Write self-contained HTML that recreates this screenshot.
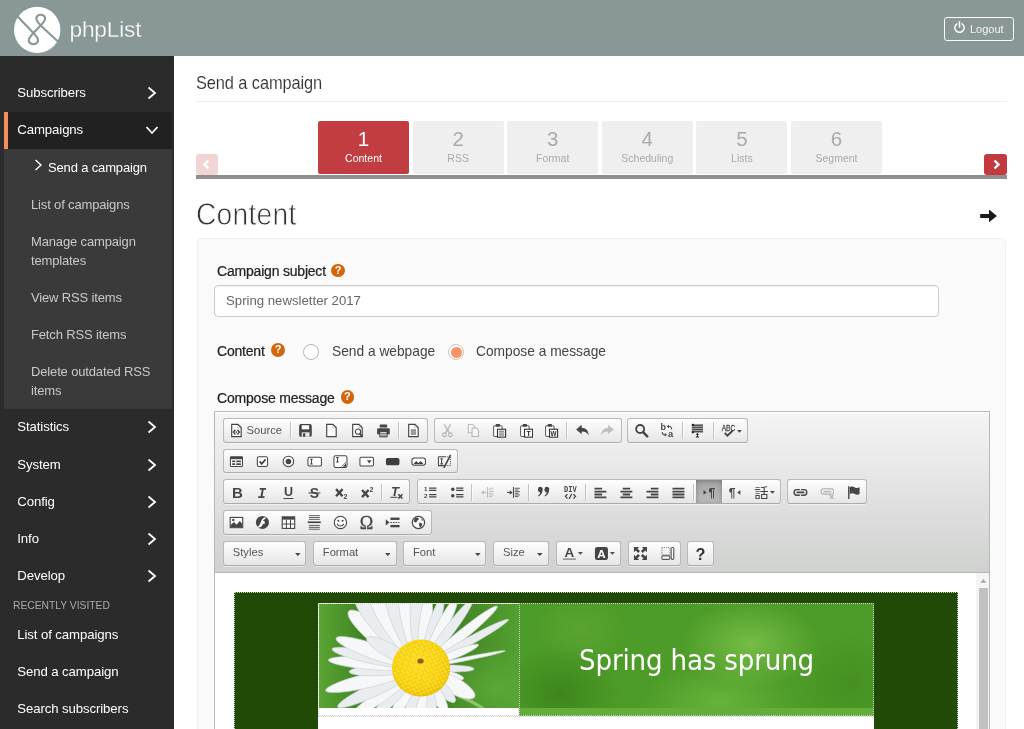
<!DOCTYPE html>
<html lang="en">
<head>
<meta charset="utf-8">
<title>phpList - Send a campaign</title>
<style>
*{box-sizing:border-box;margin:0;padding:0}
html,body{width:1024px;height:729px;overflow:hidden;background:#fff}
body{font-family:"Liberation Sans",sans-serif;color:#333;position:relative;font-size:14px}
.abs{position:absolute}
#header{position:absolute;left:0;top:0;width:1024px;height:56px;background:#899796}
#brand{position:absolute;left:69.5px;top:13px;font-size:22.7px;line-height:32px;color:#fff;font-weight:400;letter-spacing:-.2px;-webkit-text-stroke:.3px #899796}
#logout{position:absolute;left:944px;top:17px;width:70px;height:24px;border:1px solid #fff;border-radius:3px;color:rgba(255,255,255,.9);font-size:11px;line-height:22px;padding-left:25px}
#sidebar{position:absolute;left:0;top:56px;width:174px;height:673px;background:#2b2b2b}
.mi{position:absolute;left:17.3px;color:#fff;font-size:13.2px;letter-spacing:-.1px;line-height:18px;white-space:nowrap}
.sub{position:absolute;left:31px;color:#c9c9c9;font-size:13px;letter-spacing:-.15px;line-height:19px;white-space:nowrap}
.chev{position:absolute;left:146px;width:12px;height:14px}
#main{position:absolute;left:174px;top:56px;width:850px;height:673px;background:#fff}

#ptitle{position:absolute;left:196px;top:72px;transform:scaleY(1.1);transform-origin:0 80%;font-size:16.4px;line-height:22px;color:#333;letter-spacing:-.1px;-webkit-text-stroke:.1px #fff}
#hr1{position:absolute;left:196px;top:101px;width:811px;height:1px;background:#eee}
.tab{position:absolute;top:121px;width:91px;height:53.4px;background:#efefef;border-radius:2px;text-align:center;color:#aaa}
.tab b{display:block;font-weight:400;font-size:20.5px;line-height:22px;margin-top:7px}
.tab span{display:block;font-size:10.5px;line-height:14px;margin-top:1px}
.tab.on{background:#c13d42;color:#fff}
#tline{position:absolute;left:196px;top:175px;width:811px;height:4px;background:#8e8e8e}
#prev{position:absolute;left:196px;top:154px;width:22px;height:21px;background:#f1d4d4;border-radius:3px}
#next{position:absolute;left:984px;top:154px;width:23px;height:21px;background:#c23a40;border-radius:3px}
#h2{position:absolute;left:196px;top:196.5px;transform:scaleY(1.13);transform-origin:0 78%;font-size:28.2px;line-height:36px;color:#333;letter-spacing:.25px;-webkit-text-stroke:.7px #fff}
#panel{position:absolute;left:197px;top:238px;width:809px;height:500px;background:#fafafa;border:1px solid #f0f0f0;border-radius:4px}
.lbl{position:absolute;font-size:14px;line-height:18px;color:#222;font-weight:400;white-space:nowrap;letter-spacing:-.2px;-webkit-text-stroke:.22px #222}
.help{position:absolute;width:13.6px;height:13.6px;border-radius:7px;background:#d5650b;color:#fff;font-size:11px;line-height:13.6px;font-weight:700;text-align:center}
#subj{position:absolute;left:214px;top:285px;width:725px;height:32px;border:1px solid #ccc;border-radius:4px;background:#fff;font-size:13.2px;line-height:30px;padding-left:11px;color:#666;box-shadow:inset 0 1px 1px rgba(0,0,0,.06)}
.rad{position:absolute;width:16px;height:16px;border-radius:8px;border:1px solid #b5b5b5;background:#fff}
.rtx{position:absolute;font-size:13.75px;line-height:18px;color:#444;white-space:nowrap}

#cke{position:absolute;left:214px;top:411px;width:776px;height:330px;border:1px solid #b8b8b8;background:#fff}
#cketop{position:absolute;left:215px;top:412px;width:774px;height:161px;background:linear-gradient(#f4f4f4,#cfd1cf);border-bottom:1px solid #b6b6b6;box-shadow:inset 0 1px 0 #fff}
.ckg{position:absolute;border:1px solid #b9b9b9;border-bottom-color:#ababab;border-radius:3px;background:linear-gradient(#fefefe,#e6e6e6);box-shadow:0 1px 0 rgba(255,255,255,.5)}
.cks{position:absolute;width:1px;height:17px;background:#c2c2c2;box-shadow:1px 0 0 rgba(255,255,255,.6)}
.ckt{position:absolute;font-size:11.2px;line-height:14px;color:#555;white-space:nowrap}
.ckon{position:absolute;background:linear-gradient(#a4a4a4,#bcbcbc);box-shadow:inset 0 1px 5px rgba(0,0,0,.28)}

#banner{position:absolute;left:519px;top:603px;width:355px;height:113px;border:1px dotted #d3d3d3;overflow:hidden;
background:radial-gradient(ellipse 70px 45px at 230px 40px,rgba(130,200,80,.75),rgba(130,200,80,0)),radial-gradient(ellipse 80px 40px at 200px 98px,rgba(120,195,70,.6),rgba(120,195,70,0)),radial-gradient(ellipse 60px 50px at 40px 90px,rgba(50,120,20,.6),rgba(50,120,20,0)),radial-gradient(ellipse 50px 40px at 60px 25px,rgba(110,180,60,.4),rgba(110,180,60,0)),radial-gradient(ellipse 50px 50px at 330px 80px,rgba(60,130,25,.45),rgba(60,130,25,0)),#4d9b28}
#bstripe{position:absolute;left:0;top:104px;width:353px;height:7px;background:#62ae38}
#btext{position:absolute;left:0;top:31.5px;width:353px;text-align:center;font-family:"DejaVu Sans Condensed","DejaVu Sans",sans-serif;font-size:29px;line-height:48px;letter-spacing:-.15px;color:#fff;white-space:nowrap}
#wrap{position:absolute;left:0;top:0;width:1024px;height:729px;overflow:hidden;will-change:transform}
</style>
</head>
<body>
<div id="wrap">
<div id="header">
  <svg class="abs" style="left:0;top:0" width="70" height="56" viewBox="0 0 70 56">
    <circle cx="37.2" cy="29.9" r="23.2" fill="#fff"/>
    <path d="M17.6 16.6 L33.4 33 C37.2 36.9 38.7 39.2 37.9 41.4 C36.5 45.1 30.3 45.1 28.9 41.4 C28.1 39.2 29.6 36.9 33.4 33 L40.7 25.4 C44.5 21.5 45.7 19.4 44.9 17.3 C43.5 13.8 37.9 13.8 36.5 17.3 C35.7 19.4 36.9 21.5 40.7 25.4 L57.6 41.2" fill="none" stroke="#899796" stroke-width="2.1"/>
  </svg>
  <div id="brand">phpList</div>
  <div id="logout">Logout
    <svg class="abs" style="left:8px;top:3px" width="13" height="13" viewBox="0 0 12 12"><path d="M3.6 2.6 A4.3 4.3 0 1 0 8.4 2.6" fill="none" stroke="#fff" stroke-width="1.4" stroke-linecap="round"/><path d="M6 0.8 V5.6" stroke="#fff" stroke-width="1.4" stroke-linecap="round"/></svg>
  </div>
</div>
<div id="sidebar">
<div class="abs" style="left:4px;top:56px;width:168px;height:37px;background:#212121;border-left:4px solid #f58d5d"></div>
<div class="abs" style="left:4px;top:93px;width:168px;height:260px;background:#3a3a3a"></div>
<div class="mi" style="top:28px">Subscribers</div>
<svg class="chev" style="top:30px" viewBox="0 0 12 14"><path d="M2.5 1.5 L9 7 L2.5 12.5" fill="none" stroke="#fff" stroke-width="1.8"/></svg>
<div class="mi" style="top:65px">Campaigns</div>
<svg class="chev" style="top:67px;left:145px;width:14px" viewBox="0 0 14 14"><path d="M1.5 4 L7 10 L12.5 4" fill="none" stroke="#fff" stroke-width="1.8"/></svg>
<div class="sub" style="top:102px;left:48px;color:#fff">Send a campaign</div>
<svg class="abs" style="left:34px;top:103px" width="9" height="12" viewBox="0 0 9 12"><path d="M1.5 1 L7 6 L1.5 11" fill="none" stroke="#fff" stroke-width="1.4"/></svg>
<div class="sub" style="top:139px">List of campaigns</div>
<div class="sub" style="top:176px">Manage campaign<br>templates</div>
<div class="sub" style="top:232px">View RSS items</div>
<div class="sub" style="top:269px">Fetch RSS items</div>
<div class="sub" style="top:306px">Delete outdated RSS<br>items</div>
<div class="mi" style="top:362px">Statistics</div>
<svg class="chev" style="top:364px" viewBox="0 0 12 14"><path d="M2.5 1.5 L9 7 L2.5 12.5" fill="none" stroke="#fff" stroke-width="1.8"/></svg>
<div class="mi" style="top:399.6px">System</div>
<svg class="chev" style="top:401.6px" viewBox="0 0 12 14"><path d="M2.5 1.5 L9 7 L2.5 12.5" fill="none" stroke="#fff" stroke-width="1.8"/></svg>
<div class="mi" style="top:436.6px">Config</div>
<svg class="chev" style="top:438.6px" viewBox="0 0 12 14"><path d="M2.5 1.5 L9 7 L2.5 12.5" fill="none" stroke="#fff" stroke-width="1.8"/></svg>
<div class="mi" style="top:473.6px">Info</div>
<svg class="chev" style="top:475.6px" viewBox="0 0 12 14"><path d="M2.5 1.5 L9 7 L2.5 12.5" fill="none" stroke="#fff" stroke-width="1.8"/></svg>
<div class="mi" style="top:510.6px">Develop</div>
<svg class="chev" style="top:512.6px" viewBox="0 0 12 14"><path d="M2.5 1.5 L9 7 L2.5 12.5" fill="none" stroke="#fff" stroke-width="1.8"/></svg>
<div class="abs" style="left:13px;top:543px;font-size:10.3px;line-height:14px;color:#aaa;letter-spacing:0">RECENTLY VISITED</div>
<div class="mi" style="top:569.6px">List of campaigns</div>
<div class="mi" style="top:606.6px">Send a campaign</div>
<div class="mi" style="top:643.6px">Search subscribers</div>
</div>
<div id="main" style="display:none"></div>
<div id="ptitle">Send a campaign</div><div id="hr1"></div>
<div class="tab on" style="left:318.0px"><b>1</b><span>Content</span></div>
<div class="tab" style="left:412.6px"><b>2</b><span>RSS</span></div>
<div class="tab" style="left:507.2px"><b>3</b><span>Format</span></div>
<div class="tab" style="left:601.8px"><b>4</b><span>Scheduling</span></div>
<div class="tab" style="left:696.4px"><b>5</b><span>Lists</span></div>
<div class="tab" style="left:791.0px"><b>6</b><span>Segment</span></div>
<div id="tline"></div>
<div id="prev"><svg class="abs" style="left:6px;top:5px" width="9" height="11" viewBox="0 0 9 11"><path d="M6.5 1.5 L2.5 5.5 L6.5 9.5" fill="none" stroke="#fff" stroke-width="2.4"/></svg></div>
<div id="next"><svg class="abs" style="left:8px;top:5px" width="9" height="11" viewBox="0 0 9 11"><path d="M2.5 1.5 L6.5 5.5 L2.5 9.5" fill="none" stroke="#fff" stroke-width="2.4"/></svg></div>
<div id="h2">Content</div>
<svg class="abs" style="left:978px;top:208px" width="22" height="16" viewBox="978 208 22 16"><path d="M980.2 213.9 H989 V209.6 L996.9 215.9 L989 222.2 V217.9 H980.2 Z" fill="#1a1a1a"/></svg>
<div id="panel"></div>
<div class="lbl" style="left:217px;top:262px">Campaign subject</div><div class="help" style="left:331.4px;top:263.8px">?</div>
<div id="subj">Spring newsletter 2017</div>
<div class="lbl" style="left:217px;top:342px">Content</div><div class="help" style="left:271.3px;top:343.3px">?</div>
<div class="rad" style="left:303px;top:344px"></div><div class="rtx" style="left:332px;top:342.6px">Send a webpage</div>
<div class="rad" style="left:448px;top:344px;border-color:#d2c4bd"><div class="abs" style="left:1.5px;top:1.5px;width:11px;height:11px;border-radius:6px;background:#f7936a"></div></div><div class="rtx" style="left:476px;top:342.6px">Compose a message</div>
<div class="lbl" style="left:217px;top:388.8px">Compose message</div><div class="help" style="left:340.5px;top:390.2px">?</div>
<!--TB-->
<div id="cke"></div><div id="cketop"></div>
<div class="ckg" style="left:223.1px;top:418.3px;width:204.5px;height:24.9px"></div>
<svg class="abs" style="left:228.55px;top:423.30px" width="14.9" height="14.9" viewBox="0 0 16 16"><path d="M2.9 1.4 H9.6 L13.1 4.9 V14.6 H2.9 Z" fill="#fff" stroke="#454545" stroke-width="1.25"/><path d="M9.4 1.8 V5.1 H12.7" fill="none" stroke="#454545" stroke-width=".6" opacity=".5"/><path d="M6.9 7.3 L4.8 9.8 L6.9 12.3 M9.1 7.3 L11.2 9.8 L9.1 12.3" fill="none" stroke="#454545" stroke-width="1.5"/><circle cx="8" cy="9.8" r="1" fill="#454545"/></svg>
<div class="ckt" style="left:246.6px;top:422.8px">Source</div>
<div class="cks" style="left:289.5px;top:422.2px"></div>
<svg class="abs" style="left:297.95px;top:423.30px" width="14.9" height="14.9" viewBox="0 0 16 16"><rect x="1.2" y="1.2" width="13.6" height="13.6" rx="2" fill="#454545"/><rect x="4" y="2.4" width="8" height="4.4" fill="#fff"/><rect x="4" y="10" width="8.4" height="4.8" fill="#e8e8e8"/><rect x="5.4" y="11" width="2.4" height="3.8" fill="#454545"/></svg>
<svg class="abs" style="left:323.55px;top:423.30px" width="14.9" height="14.9" viewBox="0 0 16 16"><path d="M2.9 1.4 H9.6 L13.1 4.9 V14.6 H2.9 Z" fill="#fff" stroke="#454545" stroke-width="1.25"/><path d="M9.4 1.8 V5.1 H12.7" fill="none" stroke="#454545" stroke-width=".6" opacity=".5"/></svg>
<svg class="abs" style="left:349.55px;top:423.30px" width="14.9" height="14.9" viewBox="0 0 16 16"><path d="M2.9 1.4 H9.6 L13.1 4.9 V14.6 H2.9 Z" fill="#fff" stroke="#454545" stroke-width="1.25"/><path d="M9.4 1.8 V5.1 H12.7" fill="none" stroke="#454545" stroke-width=".6" opacity=".5"/><circle cx="8.6" cy="9.3" r="2.8" fill="#fff" stroke="#454545" stroke-width="1.2"/><path d="M10.6 11.5 L13.4 14.6" stroke="#454545" stroke-width="2"/></svg>
<svg class="abs" style="left:375.95px;top:423.30px" width="14.9" height="14.9" viewBox="0 0 16 16"><rect x="4" y="1.6" width="8" height="3.2" rx=".6" fill="#454545"/><rect x="1.2" y="5.6" width="13.6" height="6.8" rx="1.4" fill="#454545"/><rect x="4.2" y="9" width="7.6" height="5.8" fill="#ddd" stroke="#454545" stroke-width="1.2"/><path d="M5.4 11.2 H10.6 M5.4 13 H10.6" stroke="#666" stroke-width=".9"/></svg>
<div class="cks" style="left:398.1px;top:422.2px"></div>
<svg class="abs" style="left:406.15px;top:423.30px" width="14.9" height="14.9" viewBox="0 0 16 16"><path d="M2.9 1.4 H9.6 L13.1 4.9 V14.6 H2.9 Z" fill="#fff" stroke="#454545" stroke-width="1.25"/><path d="M9.4 1.8 V5.1 H12.7" fill="none" stroke="#454545" stroke-width=".6" opacity=".5"/><rect x="5.2" y="6.8" width="5.6" height="5.8" fill="#7a7a7a"/><path d="M5.2 8.7 H10.8 M5.2 10.7 H10.8" stroke="#ddd" stroke-width=".7"/></svg>
<div class="ckg" style="left:433.6px;top:418.3px;width:188.0px;height:24.9px"></div>
<svg class="abs" style="left:440.45px;top:423.30px" width="14.9" height="14.9" viewBox="0 0 16 16"><g opacity=".33"><path d="M4.5 1.5 L10.2 10.8 M11.5 1.5 L5.8 10.8" stroke="#454545" stroke-width="1.5" fill="none"/><circle cx="4.8" cy="12.6" r="2" fill="none" stroke="#454545" stroke-width="1.3"/><circle cx="11.2" cy="12.6" r="2" fill="none" stroke="#454545" stroke-width="1.3"/></g></svg>
<svg class="abs" style="left:466.05px;top:423.30px" width="14.9" height="14.9" viewBox="0 0 16 16"><g opacity=".33"><path d="M2.5 1.5 H7 L9.5 4 V10.5 H2.5 Z" fill="#fff" stroke="#454545" stroke-width="1.1"/><path d="M6.5 5.5 H11 L13.5 8 V14.5 H6.5 Z" fill="#fff" stroke="#454545" stroke-width="1.1"/></g></svg>
<svg class="abs" style="left:492.25px;top:423.30px" width="14.9" height="14.9" viewBox="0 0 16 16"><rect x="1.7" y="2.9" width="9.2" height="11.6" rx="1.3" fill="#fff" stroke="#5a5a5a" stroke-width="1.1"/><rect x="4" y="1.2" width="4.6" height="2.8" rx=".7" fill="#454545"/><rect x="5.9" y="6.7" width="8.7" height="8.5" fill="#fff" stroke="#333" stroke-width="1.2"/><rect x="7.4" y="8.2" width="5.7" height="5.5" fill="#8a8a8a"/><path d="M7.4 10 H13.1 M7.4 11.9 H13.1" stroke="#e8e8e8" stroke-width=".7"/></svg>
<svg class="abs" style="left:518.55px;top:423.30px" width="14.9" height="14.9" viewBox="0 0 16 16"><rect x="1.7" y="2.9" width="9.2" height="11.6" rx="1.3" fill="#fff" stroke="#5a5a5a" stroke-width="1.1"/><rect x="4" y="1.2" width="4.6" height="2.8" rx=".7" fill="#454545"/><rect x="5.9" y="6.7" width="8.7" height="8.5" fill="#fff" stroke="#333" stroke-width="1.2"/><text x="10.25" y="14" font-size="7.6" font-weight="bold" text-anchor="middle" font-family="Liberation Sans, sans-serif" fill="#222">T</text></svg>
<svg class="abs" style="left:544.45px;top:423.30px" width="14.9" height="14.9" viewBox="0 0 16 16"><rect x="1.7" y="2.9" width="9.2" height="11.6" rx="1.3" fill="#fff" stroke="#5a5a5a" stroke-width="1.1"/><rect x="4" y="1.2" width="4.6" height="2.8" rx=".7" fill="#454545"/><rect x="5.9" y="6.7" width="8.7" height="8.5" fill="#fff" stroke="#333" stroke-width="1.2"/><text x="10.25" y="13.9" font-size="7" font-weight="bold" text-anchor="middle" font-family="Liberation Sans, sans-serif" fill="#222" textLength="6.4" lengthAdjust="spacingAndGlyphs">W</text></svg>
<div class="cks" style="left:566.3px;top:422.2px"></div>
<svg class="abs" style="left:574.95px;top:423.30px" width="14.9" height="14.9" viewBox="0 0 16 16"><path d="M1.2 7 L7.2 2 V5 C11.5 5 14.5 8 14.8 13.2 C12.8 10.2 10.8 9.2 7.2 9.2 V12 Z" fill="#454545"/></svg>
<svg class="abs" style="left:600.15px;top:423.30px" width="14.9" height="14.9" viewBox="0 0 16 16"><g opacity=".3"><path d="M14.8 7 L8.8 2 V5 C4.5 5 1.5 8 1.2 13.2 C3.2 10.2 5.2 9.2 8.8 9.2 V12 Z" fill="#454545"/></g></svg>
<div class="ckg" style="left:627.4px;top:418.3px;width:121.0px;height:24.9px"></div>
<svg class="abs" style="left:633.75px;top:423.30px" width="14.9" height="14.9" viewBox="0 0 16 16"><circle cx="6.6" cy="6.4" r="4.3" fill="none" stroke="#454545" stroke-width="2"/><path d="M9.8 9.8 L14.2 14.4" stroke="#454545" stroke-width="2.6" stroke-linecap="round"/></svg>
<svg class="abs" style="left:659.55px;top:423.30px" width="14.9" height="14.9" viewBox="0 0 16 16"><text x=".6" y="8" font-size="9.6" font-weight="bold" font-family="Liberation Sans, sans-serif" fill="#454545">b</text><text x="8.6" y="15.2" font-size="10" font-weight="bold" font-family="Liberation Sans, sans-serif" fill="#454545">a</text><path d="M8.4 3.6 C11 3 12.6 4.6 12.6 7" fill="none" stroke="#454545" stroke-width="1.1"/><path d="M7.2 3.8 L9.6 1.8 V5.6 Z" fill="#454545"/><path d="M2.4 9.6 C2.4 12 4 13.2 6 12.8" fill="none" stroke="#454545" stroke-width="1.1"/><path d="M7.6 12.6 L5.2 10.8 V14.6 Z" fill="#454545"/></svg>
<div class="cks" style="left:681.9px;top:422.2px"></div>
<svg class="abs" style="left:690.15px;top:423.30px" width="14.9" height="14.9" viewBox="0 0 16 16"><rect x="2" y="1" width="12" height="9.6" fill="#9c9c9c"/><path d="M2 2.6 H14 M2 4.8 H14 M2 7 H14 M2 9.2 H14" stroke="#4a4a4a" stroke-width="1"/><rect x="2" y="1" width="2.2" height="2.2" fill="#222"/><rect x="2" y="9" width="2.2" height="2" fill="#222"/><path d="M8 11 V15 M6.3 15 H9.7 M6.6 12 H9.4" stroke="#222" stroke-width="1.1"/></svg>
<div class="cks" style="left:712.8px;top:422.2px"></div>
<svg class="abs" style="left:721.25px;top:423.30px" width="14.9" height="14.9" viewBox="0 0 16 16"><text x="8" y="8.2" font-size="8.8" text-anchor="middle" font-family="Liberation Sans, sans-serif" fill="#454545" stroke="#454545" stroke-width=".3" textLength="14.4" lengthAdjust="spacingAndGlyphs">ABC</text><path d="M4 10.6 L6.9 13.6 L12.4 8.4" fill="none" stroke="#454545" stroke-width="2.1"/></svg>
<svg class="abs" style="left:737.2px;top:429.9px" width="4.8" height="2.7" viewBox="0 0 10 5.6"><path d="M0 0 H10 L5 5.6 Z" fill="#474747"/></svg>
<div class="ckg" style="left:223.1px;top:448.6px;width:234.9px;height:24.9px"></div>
<svg class="abs" style="left:229.15px;top:453.60px" width="14.9" height="14.9" viewBox="0 0 16 16"><rect x="1.5" y="3" width="13" height="10.5" rx="1" fill="#fff" stroke="#454545" stroke-width="1.1"/><rect x="1.5" y="3" width="13" height="2.6" fill="#454545"/><rect x="3.4" y="7" width="3.2" height="1.8" fill="#454545"/><rect x="7.8" y="7" width="5" height="1.8" fill="#454545"/><rect x="3.4" y="10" width="3.2" height="1.8" fill="#454545"/><rect x="7.8" y="10" width="5" height="1.8" fill="#454545"/></svg>
<svg class="abs" style="left:255.15px;top:453.60px" width="14.9" height="14.9" viewBox="0 0 16 16"><rect x="2.5" y="3" width="11" height="10.5" rx="1.6" fill="#fff" stroke="#454545" stroke-width="1.1"/><path d="M5 8 L7.3 10.6 L11.4 5.6" fill="none" stroke="#454545" stroke-width="1.9"/></svg>
<svg class="abs" style="left:281.15px;top:453.60px" width="14.9" height="14.9" viewBox="0 0 16 16"><circle cx="8" cy="8" r="5.7" fill="#fff" stroke="#454545" stroke-width="1.1"/><circle cx="8" cy="8" r="3" fill="#454545"/></svg>
<svg class="abs" style="left:307.15px;top:453.60px" width="14.9" height="14.9" viewBox="0 0 16 16"><rect x="1" y="3.5" width="14.5" height="9.5" rx="1.8" fill="#fff" stroke="#454545" stroke-width="1.1"/><path d="M4.8 5.6 V10.8 M3.4 5.6 H6.2 M3.4 10.8 H6.2" stroke="#454545" stroke-width="1.1"/></svg>
<svg class="abs" style="left:333.15px;top:453.60px" width="14.9" height="14.9" viewBox="0 0 16 16"><rect x="1" y="2" width="14" height="12.5" rx="1.8" fill="#fff" stroke="#454545" stroke-width="1.1"/><path d="M4.8 3.8 V8.6 M3.4 3.8 H6.2 M3.4 8.6 H6.2" stroke="#454545" stroke-width="1.1"/><path d="M14 10 V13.6 H10.4 Z" fill="#454545"/><path d="M9 13.6 L14 8.6" stroke="#454545" stroke-width=".7"/></svg>
<svg class="abs" style="left:359.15px;top:453.60px" width="14.9" height="14.9" viewBox="0 0 16 16"><rect x="1" y="3.5" width="14.5" height="9.5" rx="1.4" fill="#fff" stroke="#454545" stroke-width="1.1"/><path d="M8.6 6.8 H13.4 L11 10.2 Z" fill="#454545"/></svg>
<svg class="abs" style="left:385.15px;top:453.60px" width="14.9" height="14.9" viewBox="0 0 16 16"><rect x="1" y="4.2" width="14.5" height="8" rx="2" fill="#3d3d3d"/></svg>
<svg class="abs" style="left:411.15px;top:453.60px" width="14.9" height="14.9" viewBox="0 0 16 16"><rect x="1" y="4.2" width="14.5" height="8" rx="2.4" fill="#fff" stroke="#454545" stroke-width="1.1"/><path d="M2.4 11 L5.6 7.6 L8 9.8 L10.4 7.4 L13.8 11 Z" fill="#454545"/></svg>
<svg class="abs" style="left:437.15px;top:453.60px" width="14.9" height="14.9" viewBox="0 0 16 16"><path d="M1.5 3 H9 M1.5 3 V12.5 H8" fill="none" stroke="#454545" stroke-width="1.1"/><path d="M9 3 H14.5 V12.5 H8" fill="none" stroke="#454545" stroke-width="1" stroke-dasharray="1 1"/><path d="M5 5 V10.6 M3.6 5 H6.4 M3.6 10.6 H6.4" stroke="#454545" stroke-width="1.1"/><path d="M14.6 1 L7.4 15" stroke="#454545" stroke-width="1.7"/></svg>
<div class="ckg" style="left:223.1px;top:479.3px;width:187.4px;height:24.9px"></div>
<svg class="abs" style="left:229.65px;top:484.60px" width="14.9" height="14.9" viewBox="0 0 16 16"><text x="8" y="14" font-size="16.2" font-weight="bold" text-anchor="middle" font-family="Liberation Sans, sans-serif" fill="#454545">B</text></svg>
<svg class="abs" style="left:254.75px;top:484.60px" width="14.9" height="14.9" viewBox="0 0 16 16"><text x="7.6" y="13.6" font-size="15" font-weight="bold" font-style="italic" text-anchor="middle" font-family="Liberation Mono, monospace" fill="#454545">I</text></svg>
<svg class="abs" style="left:281.25px;top:484.60px" width="14.9" height="14.9" viewBox="0 0 16 16"><text x="8" y="12.2" font-size="13.5" font-weight="bold" text-anchor="middle" font-family="Liberation Sans, sans-serif" fill="#454545">U</text><path d="M2.6 14.6 H13.4" stroke="#454545" stroke-width="1.3"/></svg>
<svg class="abs" style="left:307.15px;top:484.60px" width="14.9" height="14.9" viewBox="0 0 16 16"><text x="8" y="13.6" font-size="15" font-weight="bold" text-anchor="middle" font-family="Liberation Sans, sans-serif" fill="#454545">S</text><path d="M1.6 8.6 H14.4" stroke="#454545" stroke-width="1.2"/></svg>
<svg class="abs" style="left:333.55px;top:484.60px" width="14.9" height="14.9" viewBox="0 0 16 16"><path d="M2.2 4.4 L9.2 12 M9.2 4.4 L2.2 12" stroke="#454545" stroke-width="2.5"/><text x="10.3" y="15.4" font-size="7.4" font-weight="bold" font-family="Liberation Sans, sans-serif" fill="#454545">2</text></svg>
<svg class="abs" style="left:359.65px;top:484.60px" width="14.9" height="14.9" viewBox="0 0 16 16"><path d="M2.2 5.4 L9.2 13 M9.2 5.4 L2.2 13" stroke="#454545" stroke-width="2.5"/><text x="10.3" y="7.6" font-size="7.4" font-weight="bold" font-family="Liberation Sans, sans-serif" fill="#454545">2</text></svg>
<div class="cks" style="left:381.1px;top:483.6px"></div>
<svg class="abs" style="left:389.35px;top:484.60px" width="14.9" height="14.9" viewBox="0 0 16 16"><text x="6.4" y="11.6" font-size="14" font-weight="bold" font-style="italic" text-anchor="middle" font-family="Liberation Sans, sans-serif" fill="#454545">T</text><path d="M1.4 13.2 H9" stroke="#454545" stroke-width="1.1"/><path d="M10 10 L14.4 14.6 M14.4 10 L10 14.6" stroke="#454545" stroke-width="1.6"/></svg>
<div class="ckg" style="left:417.1px;top:479.3px;width:363.7px;height:24.9px"></div>
<div class="ckon" style="left:696.4px;top:480.3px;width:25.8px;height:22.9px"></div>
<svg class="abs" style="left:422.85px;top:484.60px" width="14.9" height="14.9" viewBox="0 0 16 16"><text x="1" y="6.8" font-size="6.6" font-weight="bold" font-family="Liberation Sans, sans-serif" fill="#454545">1</text><text x="1" y="14.2" font-size="6.6" font-weight="bold" font-family="Liberation Sans, sans-serif" fill="#454545">2</text><path d="M6.6 3.4 H14.4 M6.6 5.8 H14.4 M6.6 10.3 H14.4 M6.6 12.7 H14.4" stroke="#454545" stroke-width="1.3"/></svg>
<svg class="abs" style="left:449.55px;top:484.60px" width="14.9" height="14.9" viewBox="0 0 16 16"><circle cx="3" cy="4.5" r="1.9" fill="#454545"/><circle cx="3" cy="11.6" r="1.9" fill="#454545"/><path d="M6.6 3.4 H14.4 M6.6 5.8 H14.4 M6.6 10.3 H14.4 M6.6 12.7 H14.4" stroke="#454545" stroke-width="1.3"/></svg>
<svg class="abs" style="left:479.75px;top:484.60px" width="14.9" height="14.9" viewBox="0 0 16 16"><g opacity=".3"><path d="M8 2.2 V13.8" stroke="#454545" stroke-width="1.1"/><path d="M9.4 3.5 H15 M9.4 5.3 H13.4 M9.4 7.1 H15 M9.4 8.9 H13.4 M9.4 10.7 H15 M9.4 12.5 H13.4" stroke="#454545" stroke-width=".9"/><path d="M1 8 L4.2 5.6 V10.4 Z" fill="#454545"/><path d="M4 8 H7" stroke="#454545" stroke-width="1.2"/></g></svg>
<svg class="abs" style="left:505.95px;top:484.60px" width="14.9" height="14.9" viewBox="0 0 16 16"><path d="M8 2.2 V13.8" stroke="#454545" stroke-width="1.1"/><path d="M9.4 3.5 H15 M9.4 5.3 H13.4 M9.4 7.1 H15 M9.4 8.9 H13.4 M9.4 10.7 H15 M9.4 12.5 H13.4" stroke="#454545" stroke-width=".9"/><path d="M7.2 8 L4 5.6 V10.4 Z" fill="#454545"/><path d="M1.2 8 H4.4" stroke="#454545" stroke-width="1.2"/></svg>
<svg class="abs" style="left:536.35px;top:484.60px" width="14.9" height="14.9" viewBox="0 0 16 16"><path d="M2.2 4.4 a2.5 2.5 0 1 1 4.9 .8 C7 9 5 11.4 2.6 12.4 L2.2 11.4 C3.6 10.6 4.4 9.2 4.4 7.7 A2.5 2.5 0 0 1 2.2 4.4 Z" fill="#454545"/><path d="M9.2 4.4 a2.5 2.5 0 1 1 4.9 .8 C14 9 12 11.4 9.6 12.4 L9.2 11.4 C10.6 10.6 11.4 9.2 11.4 7.7 A2.5 2.5 0 0 1 9.2 4.4 Z" fill="#454545"/></svg>
<svg class="abs" style="left:562.55px;top:484.60px" width="14.9" height="14.9" viewBox="0 0 16 16"><text x="8" y="7.6" font-size="10.4" font-weight="bold" text-anchor="middle" font-family="Liberation Mono, monospace" fill="#454545" textLength="13.6" lengthAdjust="spacingAndGlyphs">DIV</text><path d="M4.8 9.8 L2.6 12.2 L4.8 14.6 M11.2 9.8 L13.4 12.2 L11.2 14.6 M9.4 9.4 L6.6 15" fill="none" stroke="#454545" stroke-width="1.4"/></svg>
<svg class="abs" style="left:592.55px;top:484.60px" width="14.9" height="14.9" viewBox="0 0 16 16"><path d="M1.6 3.8 H9.8 M1.6 7 H14.4 M1.6 10.2 H9.8 M1.6 13.4 H14.4" stroke="#454545" stroke-width="1.9"/></svg>
<svg class="abs" style="left:618.95px;top:484.60px" width="14.9" height="14.9" viewBox="0 0 16 16"><path d="M4 3.8 H12 M1.6 7 H14.4 M4 10.2 H12 M1.6 13.4 H14.4" stroke="#454545" stroke-width="1.9"/></svg>
<svg class="abs" style="left:644.95px;top:484.60px" width="14.9" height="14.9" viewBox="0 0 16 16"><path d="M6.2 3.8 H14.4 M1.6 7 H14.4 M6.2 10.2 H14.4 M1.6 13.4 H14.4" stroke="#454545" stroke-width="1.9"/></svg>
<svg class="abs" style="left:670.75px;top:484.60px" width="14.9" height="14.9" viewBox="0 0 16 16"><path d="M1.6 3.8 H14.4 M1.6 7 H14.4 M1.6 10.2 H14.4 M1.6 13.4 H14.4" stroke="#454545" stroke-width="1.9"/></svg>
<svg class="abs" style="left:701.75px;top:484.60px" width="14.9" height="14.9" viewBox="0 0 16 16"><path d="M1.6 5.4 L5 8 L1.6 10.6 Z" fill="#454545"/><text x="10.6" y="12.6" font-size="13" font-weight="bold" text-anchor="middle" font-family="Liberation Sans, sans-serif" fill="#454545">¶</text></svg>
<svg class="abs" style="left:727.15px;top:484.60px" width="14.9" height="14.9" viewBox="0 0 16 16"><path d="M14.4 5.4 L11 8 L14.4 10.6 Z" fill="#454545"/><text x="5.4" y="12.6" font-size="13" font-weight="bold" text-anchor="middle" font-family="Liberation Sans, sans-serif" fill="#454545">¶</text></svg>
<svg class="abs" style="left:753.55px;top:484.60px" width="14.9" height="14.9" viewBox="0 0 16 16"><text x="8" y="14.2" font-size="15" text-anchor="middle" font-family="Noto Sans CJK JP, sans-serif" fill="#454545" textLength="15.4" lengthAdjust="spacingAndGlyphs">話</text></svg>
<div class="cks" style="left:471.2px;top:483.6px"></div>
<div class="cks" style="left:527.8px;top:483.6px"></div>
<div class="cks" style="left:584.5px;top:483.6px"></div>
<div class="cks" style="left:693.0px;top:483.6px"></div>
<svg class="abs" style="left:770.2px;top:491.2px" width="4.8" height="2.7" viewBox="0 0 10 5.6"><path d="M0 0 H10 L5 5.6 Z" fill="#474747"/></svg>
<div class="ckg" style="left:787.4px;top:479.3px;width:79.3px;height:24.9px"></div>
<svg class="abs" style="left:793.15px;top:484.60px" width="14.9" height="14.9" viewBox="0 0 16 16"><rect x="1.2" y="5" width="13.6" height="6" rx="3" fill="none" stroke="#454545" stroke-width="1.5"/><path d="M4.6 8 H11.4" stroke="#454545" stroke-width="1.9" stroke-linecap="round"/><path d="M8 4 V5.9 M8 10.1 V12" stroke="#f0f0f0" stroke-width="1.3"/></svg>
<svg class="abs" style="left:819.55px;top:484.60px" width="14.9" height="14.9" viewBox="0 0 16 16"><g opacity=".3"><rect x="1.2" y="4" width="13.6" height="6" rx="3" fill="none" stroke="#454545" stroke-width="1.5"/><path d="M4.6 7 H11.4" stroke="#454545" stroke-width="1.9" stroke-linecap="round"/><path d="M10.4 10.6 L14.6 15 M14.6 10.6 L10.4 15" stroke="#454545" stroke-width="1.5"/></g></svg>
<svg class="abs" style="left:846.05px;top:484.60px" width="14.9" height="14.9" viewBox="0 0 16 16"><path d="M3 1.4 V15" stroke="#454545" stroke-width="1.5"/><path d="M4 2.4 C6 1.2 8 1.6 9.6 2.6 C11.2 3.6 13 3.4 14.6 2.4 V9.6 C13 10.6 11.2 10.8 9.6 9.8 C8 8.8 6 8.4 4 9.6 Z" fill="#454545"/></svg>
<div class="ckg" style="left:223.1px;top:510.0px;width:208.8px;height:24.9px"></div>
<svg class="abs" style="left:229.15px;top:515.00px" width="14.9" height="14.9" viewBox="0 0 16 16"><rect x="1.3" y="2.6" width="13.4" height="11" fill="#fff" stroke="#454545" stroke-width="1.2"/><path d="M2 13 V10.4 L5.4 7.6 L8 10.6 L11.6 6.4 L14 9.4 V13 Z" fill="#454545"/><circle cx="4.6" cy="5.4" r="1.3" fill="#454545"/></svg>
<svg class="abs" style="left:255.15px;top:515.00px" width="14.9" height="14.9" viewBox="0 0 16 16"><circle cx="8" cy="8" r="7" fill="#454545"/><path d="M11.4 3.2 C8.6 3.4 7.8 5.4 7.2 7.2 H9.6 V8.8 H6.6 C6 10.6 5.4 12.2 3.6 12.8 C6.4 13 7.4 11 8.1 8.9" fill="none" stroke="#fff" stroke-width="1.5"/></svg>
<svg class="abs" style="left:281.15px;top:515.00px" width="14.9" height="14.9" viewBox="0 0 16 16"><rect x="1.3" y="2" width="13.4" height="12.4" fill="#fff" stroke="#454545" stroke-width="1.2"/><rect x="1.3" y="2" width="13.4" height="3" fill="#454545"/><path d="M1.3 9.6 H14.7 M5.8 5 V14.4 M10.2 5 V14.4" stroke="#454545" stroke-width="1.1"/></svg>
<svg class="abs" style="left:307.15px;top:515.00px" width="14.9" height="14.9" viewBox="0 0 16 16"><path d="M2 .7 H13.8 M2 2.7 H13.8 M2 4.7 H13.8 M2 11.2 H13.8 M2 13.3 H13.8 M2 15.3 H13.8" stroke="#555" stroke-width="1"/><path d="M.8 7.8 H14.8" stroke="#454545" stroke-width="1.8"/></svg>
<svg class="abs" style="left:333.15px;top:515.00px" width="14.9" height="14.9" viewBox="0 0 16 16"><circle cx="8" cy="8" r="6.6" fill="#fff" stroke="#454545" stroke-width="1.2"/><circle cx="5.7" cy="6.2" r="1.1" fill="#454545"/><circle cx="10.3" cy="6.2" r="1.1" fill="#454545"/><path d="M4.4 9.4 C5.6 12.6 10.4 12.6 11.6 9.4" fill="none" stroke="#454545" stroke-width="1.2"/></svg>
<svg class="abs" style="left:359.15px;top:515.00px" width="14.9" height="14.9" viewBox="0 0 16 16"><text x="8" y="14.6" font-size="19.5" text-anchor="middle" font-family="Liberation Serif, serif" fill="#454545" stroke="#454545" stroke-width=".35">Ω</text></svg>
<svg class="abs" style="left:385.15px;top:515.00px" width="14.9" height="14.9" viewBox="0 0 16 16"><path d="M.8 4.6 L4.8 8 L.8 11.4 Z" fill="#454545"/><rect x="5.8" y="2.8" width="9.8" height="2.5" fill="#454545"/><rect x="5.8" y="10.7" width="9.8" height="2.5" fill="#454545"/><path d="M5.8 8 H15.6" stroke="#555" stroke-width="1.1" stroke-dasharray="1.8 1"/></svg>
<svg class="abs" style="left:411.15px;top:515.00px" width="14.9" height="14.9" viewBox="0 0 16 16"><circle cx="8" cy="8" r="6.6" fill="#fff" stroke="#454545" stroke-width="1.3"/><path d="M4 3.6 C6 2.4 8 3 8.6 4.4 C8 6 6.4 5.6 6 7.4 C5.6 8.6 4 8 3 6.6 Z M9 8.4 C10.6 8 12.4 9 12 10.6 C11.6 12 10.4 13 9.6 13.6 C9 12 8.4 10 9 8.4 Z M11 3.4 L13.4 5.8 L11.4 6 Z" fill="#454545"/></svg>
<div class="ckg" style="left:223.1px;top:540.7px;width:83.3px;height:24.9px"></div>
<div class="ckt" style="left:232.8px;top:545.2px">Styles</div>
<svg class="abs" style="left:295.0px;top:552.5px" width="5.6" height="3.1" viewBox="0 0 10 5.6"><path d="M0 0 H10 L5 5.6 Z" fill="#474747"/></svg>
<div class="ckg" style="left:313.3px;top:540.7px;width:83.3px;height:24.9px"></div>
<div class="ckt" style="left:322.8px;top:545.2px">Format</div>
<svg class="abs" style="left:384.9px;top:552.5px" width="5.6" height="3.1" viewBox="0 0 10 5.6"><path d="M0 0 H10 L5 5.6 Z" fill="#474747"/></svg>
<div class="ckg" style="left:403.4px;top:540.7px;width:83.1px;height:24.9px"></div>
<div class="ckt" style="left:412.9px;top:545.2px">Font</div>
<svg class="abs" style="left:475.3px;top:552.5px" width="5.6" height="3.1" viewBox="0 0 10 5.6"><path d="M0 0 H10 L5 5.6 Z" fill="#474747"/></svg>
<div class="ckg" style="left:493.4px;top:540.7px;width:55.3px;height:24.9px"></div>
<div class="ckt" style="left:503px;top:545.2px">Size</div>
<svg class="abs" style="left:537.0px;top:552.5px" width="5.6" height="3.1" viewBox="0 0 10 5.6"><path d="M0 0 H10 L5 5.6 Z" fill="#474747"/></svg>
<div class="ckg" style="left:555.6px;top:540.7px;width:65.7px;height:24.9px"></div>
<svg class="abs" style="left:562.05px;top:545.70px" width="14.9" height="14.9" viewBox="0 0 16 16"><text x="8" y="11.8" font-size="14.5" font-weight="bold" text-anchor="middle" font-family="Liberation Sans, sans-serif" fill="#454545">A</text><rect x="1" y="13.2" width="14" height="1.8" fill="#999"/></svg>
<svg class="abs" style="left:578.0px;top:552.3px" width="4.8" height="2.7" viewBox="0 0 10 5.6"><path d="M0 0 H10 L5 5.6 Z" fill="#474747"/></svg>
<svg class="abs" style="left:593.55px;top:545.70px" width="14.9" height="14.9" viewBox="0 0 16 16"><rect x="1" y="1" width="14" height="14" rx="2.4" fill="#454545"/><text x="8" y="12.6" font-size="12.5" font-weight="bold" text-anchor="middle" font-family="Liberation Sans, sans-serif" fill="#fff">A</text></svg>
<svg class="abs" style="left:610.3px;top:552.3px" width="4.8" height="2.7" viewBox="0 0 10 5.6"><path d="M0 0 H10 L5 5.6 Z" fill="#474747"/></svg>
<div class="ckg" style="left:627.6px;top:540.7px;width:53.0px;height:24.9px"></div>
<svg class="abs" style="left:633.45px;top:545.70px" width="14.9" height="14.9" viewBox="0 0 16 16"><g fill="#454545"><path d="M1 1 H6.6 L1 6.6 Z M2.4 4.4 L4.4 2.4 L7.5 5.5 L5.5 7.5 Z"/><g transform="translate(16 0) scale(-1 1)"><path d="M1 1 H6.6 L1 6.6 Z M2.4 4.4 L4.4 2.4 L7.5 5.5 L5.5 7.5 Z"/></g><g transform="translate(0 16) scale(1 -1)"><path d="M1 1 H6.6 L1 6.6 Z M2.4 4.4 L4.4 2.4 L7.5 5.5 L5.5 7.5 Z"/></g><g transform="translate(16 16) scale(-1 -1)"><path d="M1 1 H6.6 L1 6.6 Z M2.4 4.4 L4.4 2.4 L7.5 5.5 L5.5 7.5 Z"/></g></g></svg>
<svg class="abs" style="left:659.85px;top:545.70px" width="14.9" height="14.9" viewBox="0 0 16 16"><rect x="2" y="1.8" width="8.6" height="7.6" fill="none" stroke="#777" stroke-width="1" stroke-dasharray="1.2 1"/><rect x="2" y="10.6" width="8.6" height="3.8" rx="1.2" fill="#fff" stroke="#555" stroke-width="1.2"/><rect x="12" y="1.6" width="2.8" height="12.8" rx="1.2" fill="#fff" stroke="#555" stroke-width="1.2"/></svg>
<div class="ckg" style="left:687.1px;top:540.7px;width:27.3px;height:24.9px"></div>
<svg class="abs" style="left:693.15px;top:545.70px" width="14.9" height="14.9" viewBox="0 0 16 16"><text x="8" y="14.6" font-size="17.5" font-weight="bold" text-anchor="middle" font-family="Liberation Sans, sans-serif" fill="#333">?</text></svg>
<!--/TB-->
<!--ED-->
<div class="abs" style="left:215px;top:573px;width:774px;height:156px;background:#fff"></div>
<div class="abs" style="left:976px;top:573px;width:13px;height:156px;background:#f4f4f4"></div>
<svg class="abs" style="left:980px;top:579.4px" width="6.6" height="3.8" viewBox="0 0 8 5"><path d="M0 5 L4 0 L8 5 Z" fill="#a6a6a6"/></svg>
<div class="abs" style="left:978.5px;top:588px;width:9px;height:141px;background:#c1c1c1"></div>
<div class="abs" style="left:234px;top:592px;width:724px;height:137px;background:#204a06;border:1px dotted #c9d3c2;border-bottom:0"></div>
<div class="abs" style="left:318px;top:603px;width:201px;height:113px;background:#fff;border:1px dotted #d3d3d3"></div>
<div id="banner"><div id="bstripe"></div><div id="btext">Spring has sprung</div></div>
<div class="abs" style="left:318px;top:716px;width:556px;height:13px;background:#fff;border-top:1px dotted #cfcfcf"></div>
<svg class="abs" style="left:319px;top:604px" width="200" height="104" viewBox="0 0 200 104"><defs><linearGradient id="dg" x1="0" y1="0" x2="1" y2="0"><stop offset="0" stop-color="#5aa534"/><stop offset=".22" stop-color="#3f8420"/><stop offset=".6" stop-color="#3d7e20"/><stop offset="1" stop-color="#539f30"/></linearGradient><radialGradient id="yg" cx=".45" cy=".4" r=".6"><stop offset="0" stop-color="#ffe62a"/><stop offset=".7" stop-color="#fbd40c"/><stop offset="1" stop-color="#e9bd00"/></radialGradient><pattern id="yp" width="5.6" height="4.8" patternUnits="userSpaceOnUse" patternTransform="rotate(18)"><circle cx="1.4" cy="1.2" r="1.7" fill="#ffe83a" stroke="#e0ac00" stroke-width=".55" opacity=".75"/><circle cx="4.2" cy="3.6" r="1.7" fill="#ffe83a" stroke="#e0ac00" stroke-width=".55" opacity=".75"/></pattern><radialGradient id="lg"><stop offset="0" stop-color="#5eaa3a" stop-opacity=".8"/><stop offset="1" stop-color="#5eaa3a" stop-opacity="0"/></radialGradient><filter id="bl" x="-5%" y="-5%" width="110%" height="110%"><feGaussianBlur stdDeviation=".45"/></filter></defs><rect width="200" height="104" fill="url(#dg)"/><ellipse cx="175" cy="85" rx="60" ry="45" fill="url(#lg)"/><g filter="url(#bl)"><path d="M140 92 C150 96 158 100 166 106" stroke="#8fc46e" stroke-width="3.5" fill="none"/><ellipse cx="152.0" cy="64" rx="42.0" ry="10.5" fill="#f5f7f8" stroke="#c9d0d4" stroke-width=".6" transform="rotate(-142 102 64)"/><ellipse cx="154.0" cy="64" rx="44.0" ry="9.5" fill="#eaedf0" stroke="#c9d0d4" stroke-width=".6" transform="rotate(-133 102 64)"/><ellipse cx="152.0" cy="64" rx="42.0" ry="9.0" fill="#f5f7f8" stroke="#c9d0d4" stroke-width=".6" transform="rotate(-124 102 64)"/><ellipse cx="148.0" cy="64" rx="38.0" ry="8.5" fill="#eaedf0" stroke="#c9d0d4" stroke-width=".6" transform="rotate(-114 102 64)"/><ellipse cx="146.0" cy="64" rx="36.0" ry="8.0" fill="#f5f7f8" stroke="#c9d0d4" stroke-width=".6" transform="rotate(-104 102 64)"/><ellipse cx="145.0" cy="64" rx="35.0" ry="7.5" fill="#eaedf0" stroke="#c9d0d4" stroke-width=".6" transform="rotate(-94 102 64)"/><ellipse cx="143.5" cy="64" rx="33.5" ry="6.5" fill="#f5f7f8" stroke="#c9d0d4" stroke-width=".6" transform="rotate(-84 102 64)"/><ellipse cx="143.5" cy="64" rx="33.5" ry="5.5" fill="#eaedf0" stroke="#c9d0d4" stroke-width=".6" transform="rotate(-73 102 64)"/><ellipse cx="146.0" cy="64" rx="36.0" ry="5.5" fill="#f5f7f8" stroke="#c9d0d4" stroke-width=".6" transform="rotate(-63 102 64)"/><ellipse cx="149.0" cy="64" rx="39.0" ry="5.0" fill="#eaedf0" stroke="#c9d0d4" stroke-width=".6" transform="rotate(-53 102 64)"/><ellipse cx="155.0" cy="64" rx="45.0" ry="5.0" fill="#f5f7f8" stroke="#c9d0d4" stroke-width=".6" transform="rotate(-39 102 64)"/><ellipse cx="156.0" cy="64" rx="46.0" ry="4.0" fill="#eaedf0" stroke="#c9d0d4" stroke-width=".6" transform="rotate(-29 102 64)"/><ellipse cx="137.0" cy="64" rx="27.0" ry="4.0" fill="#f5f7f8" stroke="#c9d0d4" stroke-width=".6" transform="rotate(-22 102 64)"/><ellipse cx="149.0" cy="64" rx="39.0" ry="1.8" fill="#f5f7f8" stroke="#c9d0d4" stroke-width=".6" transform="rotate(-11.5 102 64)"/><ellipse cx="132.5" cy="64" rx="22.5" ry="3.5" fill="#eaedf0" stroke="#c9d0d4" stroke-width=".6" transform="rotate(1 102 64)"/><ellipse cx="128.0" cy="64" rx="18.0" ry="4.0" fill="#f5f7f8" stroke="#c9d0d4" stroke-width=".6" transform="rotate(14 102 64)"/><ellipse cx="136.5" cy="64" rx="26.5" ry="8.5" fill="#f5f7f8" stroke="#c9d0d4" stroke-width=".6" transform="rotate(28.3 102 64)"/><ellipse cx="130.0" cy="64" rx="20.0" ry="6.0" fill="#eaedf0" stroke="#c9d0d4" stroke-width=".6" transform="rotate(45 102 64)"/><ellipse cx="132.0" cy="64" rx="22.0" ry="6.0" fill="#f5f7f8" stroke="#c9d0d4" stroke-width=".6" transform="rotate(60 102 64)"/><ellipse cx="132.0" cy="64" rx="22.0" ry="6.0" fill="#eaedf0" stroke="#c9d0d4" stroke-width=".6" transform="rotate(75 102 64)"/><ellipse cx="132.0" cy="64" rx="22.0" ry="6.0" fill="#f5f7f8" stroke="#c9d0d4" stroke-width=".6" transform="rotate(90 102 64)"/><ellipse cx="132.0" cy="64" rx="22.0" ry="6.0" fill="#eaedf0" stroke="#c9d0d4" stroke-width=".6" transform="rotate(105 102 64)"/><ellipse cx="135.0" cy="64" rx="25.0" ry="6.0" fill="#f5f7f8" stroke="#c9d0d4" stroke-width=".6" transform="rotate(120 102 64)"/><ellipse cx="141.0" cy="64" rx="31.0" ry="6.0" fill="#eaedf0" stroke="#c9d0d4" stroke-width=".6" transform="rotate(134 102 64)"/><ellipse cx="150.0" cy="64" rx="40.0" ry="6.0" fill="#f5f7f8" stroke="#c9d0d4" stroke-width=".6" transform="rotate(145 102 64)"/><ellipse cx="152.0" cy="64" rx="42.0" ry="6.5" fill="#eaedf0" stroke="#c9d0d4" stroke-width=".6" transform="rotate(155 102 64)"/><ellipse cx="155.0" cy="64" rx="45.0" ry="7.0" fill="#f5f7f8" stroke="#c9d0d4" stroke-width=".6" transform="rotate(166.7 102 64)"/><ellipse cx="142.0" cy="64" rx="32.0" ry="5.5" fill="#eaedf0" stroke="#c9d0d4" stroke-width=".6" transform="rotate(177 102 64)"/><ellipse cx="152.5" cy="64" rx="42.5" ry="6.0" fill="#f5f7f8" stroke="#c9d0d4" stroke-width=".6" transform="rotate(-175 102 64)"/><ellipse cx="151.5" cy="64" rx="41.5" ry="6.0" fill="#eaedf0" stroke="#c9d0d4" stroke-width=".6" transform="rotate(-168 102 64)"/><ellipse cx="151.0" cy="64" rx="41.0" ry="7.5" fill="#f5f7f8" stroke="#c9d0d4" stroke-width=".6" transform="rotate(-160.7 102 64)"/><ellipse cx="137.0" cy="64" rx="27.0" ry="7.0" fill="#eaedf0" stroke="#c9d0d4" stroke-width=".6" transform="rotate(-151 102 64)"/><ellipse cx="102" cy="64" rx="29" ry="28.5" fill="url(#yg)"/><ellipse cx="102" cy="64" rx="28" ry="27.5" fill="url(#yp)"/><ellipse cx="101.5" cy="57" rx="3.2" ry="2.6" fill="#9a5a12"/></g></svg>
<!--/ED-->
</div>
</body>
</html>
